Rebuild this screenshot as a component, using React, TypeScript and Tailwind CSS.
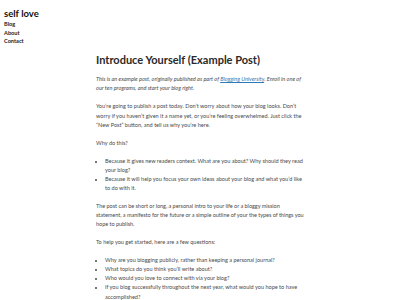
const navLinks = ["Blog", "About", "Contact"];

const whyItems = [
  "Because it gives new readers context. What are you about? Why should they read your blog?",
  "Because it will help you focus your own ideas about your blog and what you’d like to do with it.",
];

const questions = [
  "Why are you blogging publicly, rather than keeping a personal journal?",
  "What topics do you think you’ll write about?",
  "Who would you love to connect with via your blog?",
  "If you blog successfully throughout the next year, what would you hope to have accomplished?",
];

export default function App() {
  return (
    <div className="min-h-[300px] bg-white font-['Lato',sans-serif] grid grid-cols-[96px_210px_1fr]">
      {/* Site header / sidebar */}
      <header className="pl-1 pt-[8px]">
        <h1 className="text-[9.5px] leading-[12px] font-bold text-[#111]">self love</h1>
        <nav className="flex flex-col">
          {navLinks.map((link) => (
            <a key={link} className="text-[5.6px] leading-[8.7px] font-bold text-[#222]">
              {link}
            </a>
          ))}
        </nav>
      </header>

      {/* Post */}
      <main className="pt-[50px] text-[5.55px] leading-[9.2px] text-[#4a4a4a]">
        <h2 className="text-[11px] leading-[20px] font-bold text-[#2a2a2a] mb-[5px]">
          Introduce Yourself (Example Post)
        </h2>
        <p className="italic mb-[9px]">
          This is an example post, originally published as part of{" "}
          <a className="text-[#2b7bb9] underline">Blogging University</a>. Enroll in one of our
          ten programs, and start your blog right.
        </p>
        <p className="mb-[9px]">
          You’re going to publish a post today. Don’t worry about how your blog looks. Don’t worry
          if you haven’t given it a name yet, or you’re feeling overwhelmed. Just click the “New
          Post” button, and tell us why you’re here.
        </p>
        <p className="mb-[8.5px]">Why do this?</p>
        <ul className="list-disc pl-[9px] mb-[8.5px]">
          {whyItems.map((item) => (
            <li key={item}>{item}</li>
          ))}
        </ul>
        <p className="mb-[8.5px] tracking-[-0.04px]">
          The post can be short or long, a personal intro to your life or a bloggy mission
          statement, a manifesto for the future or a simple outline of your the types of things you
          hope to publish.
        </p>
        <p className="mb-[8.5px]">To help you get started, here are a few questions:</p>
        <ul className="list-disc pl-[9px]">
          {questions.map((item) => (
            <li key={item}>{item}</li>
          ))}
        </ul>
      </main>
    </div>
  );
}
